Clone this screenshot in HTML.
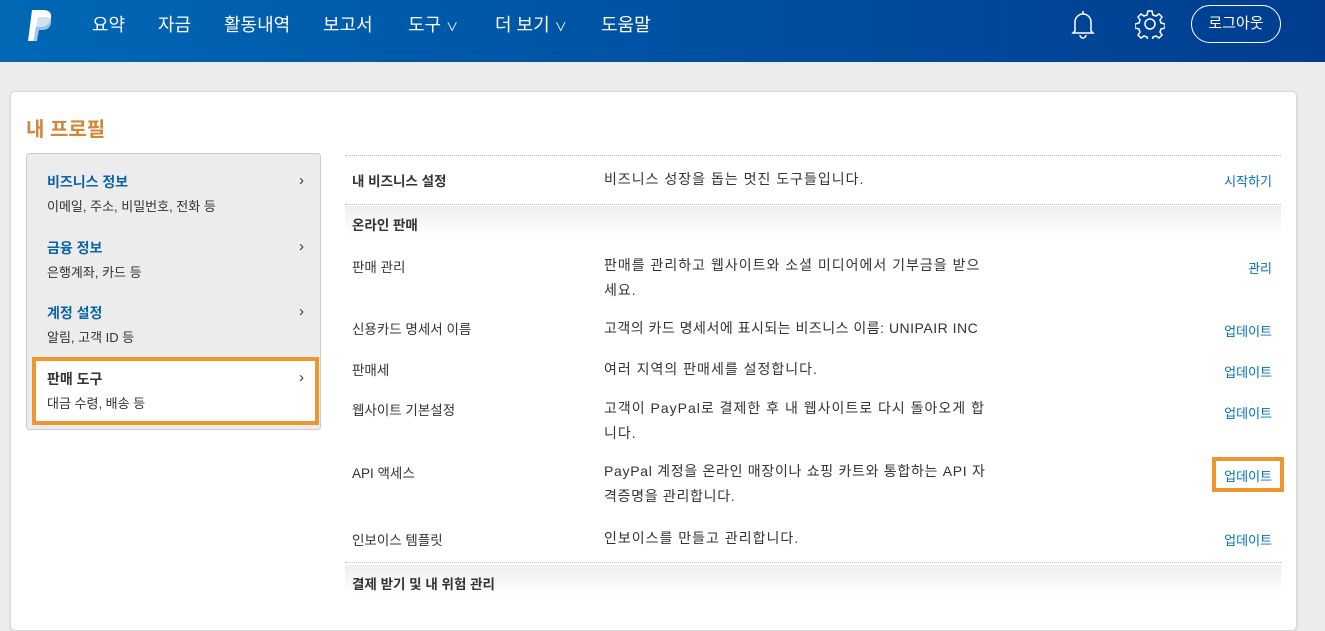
<!DOCTYPE html>
<html><head><meta charset="utf-8"><style>
*{margin:0;padding:0;box-sizing:border-box}
body{width:1325px;height:604px;overflow:hidden;background:#ececec;font-family:"Liberation Sans","Noto Sans CJK KR",sans-serif;font-size:14px;color:#333;position:relative}
.hd{position:absolute;left:0;top:0;width:1325px;height:62px;background:linear-gradient(90deg,#0068b5,#0053a5 45%,#003d8f)}
.nav{position:absolute;top:11px;color:#fff;font-size:18px}
.card{position:absolute;left:10px;top:91px;width:1287px;height:540px;background:#fff;border:1px solid #d8d8d8;border-radius:5px;box-shadow:0 1px 2px rgba(0,0,0,.1)}
.t{position:absolute;white-space:nowrap}
.side{position:absolute;left:26px;top:153px;width:295px;height:277px;background:#ececec;border:1px solid #ccc;border-radius:3px}
.st{position:absolute;left:47px;font-size:14px;font-weight:bold;color:#0b63a8}
.ss{position:absolute;left:47px;font-size:13px;color:#333}
.ch{position:absolute;left:299px;font-size:15px;color:#333}
.a{position:absolute;right:53px;color:#0070ba;font-size:13px}
.dot{position:absolute;left:345px;width:936px;border-top:1px dotted #bbb}
.sec{position:absolute;left:345px;width:936px;height:30px;background:linear-gradient(#eee,#fff)}
.l{position:absolute;left:352px;font-size:13.5px}
.d{position:absolute;left:604px;font-size:14px;width:388px;line-height:25px;letter-spacing:1px;word-break:break-all}
</style></head><body>
<div class="hd">
<svg style="position:absolute;left:26px;top:9px" width="30" height="33" viewBox="0 0 30 33"><path d="M6 1h11c6 0 9 3 8 8-1 6-5 9-11 9h-4l-2 14H2z" fill="#fff"/><path d="M12 8h8c4 0 6 2 5 6-1 5-4 7-9 7h-3l-2 11H7z" fill="#c4daf2" opacity=".8"/></svg>
<span class="nav" style="left:92px">요약</span>
<span class="nav" style="left:158px">자금</span>
<span class="nav" style="left:224px">활동내역</span>
<span class="nav" style="left:323px">보고서</span>
<span class="nav" style="left:408px">도구 <span style="font-size:12px">∨</span></span>
<span class="nav" style="left:495px">더 보기 <span style="font-size:12px">∨</span></span>
<span class="nav" style="left:601px">도움말</span>
<svg style="position:absolute;left:1070px;top:9px" width="26" height="30" viewBox="0 0 26 30" fill="none" stroke="#fff" stroke-width="1.5"><path d="M13 2v3M5 22V13a8 8 0 0 1 16 0v9l2 2H3z"/><path d="M10 26a3 3 0 0 0 6 0"/></svg>
<svg style="position:absolute;left:1135px;top:9px" width="30" height="30" viewBox="0 0 30 30" fill="none" stroke="#fff" stroke-width="1.5"><path d="M13 2h4l1 4 3 1 3-2 3 3-2 3 1 3 4 1v4l-4 1-1 3 2 3-3 3-3-2-3 1-1 4h-4l-1-4-3-1-3 2-3-3 2-3-1-3-4-1v-4l4-1 1-3-2-3 3-3 3 2 3-1z"/><circle cx="15" cy="15" r="5"/></svg>
<div style="position:absolute;left:1191px;top:5px;width:90px;height:38px;border:1.5px solid #fff;border-radius:19px;color:#fff;font-size:15px;text-align:center;line-height:35px">로그아웃</div>
</div>
<div class="card"></div>
<div class="t" style="left:26px;top:113px;font-size:20px;font-weight:bold;color:#d0883a">내 프로필</div>
<div class="side"></div>
<div style="position:absolute;left:32px;top:357px;width:287px;height:68px;background:#fff;border:4px solid #f0962f"></div>
<div class="st" style="top:172px">비즈니스 정보</div><div class="ss" style="top:196px">이메일, 주소, 비밀번호, 전화 등</div><div class="ch" style="top:172px">›</div>
<div class="st" style="top:238px">금융 정보</div><div class="ss" style="top:262px">은행계좌, 카드 등</div><div class="ch" style="top:238px">›</div>
<div class="st" style="top:303px">계정 설정</div><div class="ss" style="top:327px">알림, 고객 ID 등</div><div class="ch" style="top:303px">›</div>
<div class="st" style="top:369px;color:#333">판매 도구</div><div class="ss" style="top:393px">대금 수령, 배송 등</div><div class="ch" style="top:369px">›</div>

<div class="dot" style="top:155px"></div>
<div class="l" style="top:170px;font-weight:bold">내 비즈니스 설정</div>
<div class="d" style="top:167px">비즈니스 성장을 돕는 멋진 도구들입니다.</div>
<div class="a" style="top:171px">시작하기</div>
<div class="dot" style="top:204px"></div>
<div class="sec" style="top:206px"></div>
<div class="l" style="top:214px;font-weight:bold">온라인 판매</div>
<div class="l" style="top:256px">판매 관리</div>
<div class="d" style="top:253px">판매를 관리하고 웹사이트와 소셜 미디어에서 기부금을 받으세요.</div>
<div class="a" style="top:258px">관리</div>
<div class="l" style="top:318px">신용카드 명세서 이름</div>
<div class="d" style="top:316px;width:420px;letter-spacing:0.5px">고객의 카드 명세서에 표시되는 비즈니스 이름: UNIPAIR INC</div>
<div class="a" style="top:321px">업데이트</div>
<div class="l" style="top:359px">판매세</div>
<div class="d" style="top:357px">여러 지역의 판매세를 설정합니다.</div>
<div class="a" style="top:362px">업데이트</div>
<div class="l" style="top:399px">웹사이트 기본설정</div>
<div class="d" style="top:396px">고객이 PayPal로 결제한 후 내 웹사이트로 다시 돌아오게 합니다.</div>
<div class="a" style="top:403px">업데이트</div>
<div class="l" style="top:462px">API 액세스</div>
<div class="d" style="top:459px;width:420px;letter-spacing:0.7px">PayPal 계정을 온라인 매장이나 쇼핑 카트와 통합하는 API 자<br>격증명을 관리합니다.</div>
<div style="position:absolute;left:1212px;top:457px;width:72px;height:35px;border:4px solid #f0962f"></div>
<div class="a" style="top:466px">업데이트</div>
<div class="l" style="top:529px">인보이스 템플릿</div>
<div class="d" style="top:526px">인보이스를 만들고 관리합니다.</div>
<div class="a" style="top:530px">업데이트</div>
<div class="dot" style="top:562px"></div>
<div class="sec" style="top:565px"></div>
<div class="l" style="top:573px;font-weight:bold">결제 받기 및 내 위험 관리</div>
</body></html>
